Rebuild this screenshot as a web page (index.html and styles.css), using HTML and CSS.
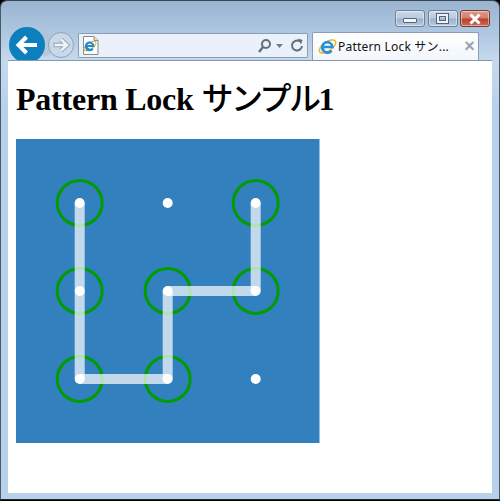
FILE: index.html
```html
<!DOCTYPE html>
<html lang="ja">
<head>
<meta charset="utf-8">
<title>Pattern Lock サンプル1</title>
<link rel="stylesheet" href="styles.css">
</head>
<body>
<div class="window">
  <header class="chrome">
    <div class="controls">
      <div class="ctl"><span class="min-glyph"></span></div>
      <div class="ctl"><span class="max-glyph"></span></div>
      <div class="ctl close">
        <svg width="16" height="12" viewBox="0 0 16 12"><path d="M3.5 1.5 L12.5 10.5 M12.5 1.5 L3.5 10.5" stroke="#fff" stroke-width="3" fill="none"/></svg>
      </div>
    </div>
    <div class="toolbar">
      <svg class="nav" width="70" height="40" viewBox="0 0 70 40">
        <path d="M27 2 C36 6 40 8 52 6 L52 22 L36 30 Z" fill="#b3c3d4" opacity=".75"/>
        <circle cx="53" cy="18" r="12.5" fill="#c9d9ea" stroke="#8fa3b8" stroke-width="1"/>
        <path d="M45.5 18 H58 M53 12.5 L59 18 L53 23.5" fill="none" stroke="#93a5b8" stroke-width="4.6"/>
        <path d="M46.5 18 H58 M53 12.5 L59 18 L53 23.5" fill="none" stroke="#eef3f8" stroke-width="2.6"/>
        <circle cx="19" cy="18" r="18" fill="#0c7fbc"/>
        <path d="M10.5 18 H29 M18.5 10 L10.5 18 L18.5 26" fill="none" stroke="#fff" stroke-width="4"/>
      </svg>
      <div class="address">
        <svg class="page-icon" width="17" height="19" viewBox="0 0 17 19">
          <path d="M1.5 .5 H12 L16 4.5 V18.5 H1.5 Z" fill="#fff" stroke="#8a8a8a"/>
          <path d="M12 .5 V4.5 H16" fill="#ddd" stroke="#8a8a8a"/>
          <ellipse cx="8" cy="10" rx="7" ry="3" fill="none" stroke="#e8b321" stroke-width="1.2" transform="rotate(-35 8 10)"/>
          <path d="M4 10 H11.5 A3.9 3.9 0 1 0 10.8 12.6 M4.5 10 A4 4 0 0 0 11 13" fill="none" stroke="#1f8bd8" stroke-width="2"/>
        </svg>
        <svg class="addr-tools" width="50" height="16" viewBox="0 0 50 16">
          <circle cx="9" cy="6" r="4" fill="none" stroke="#5f6f7f" stroke-width="2"/>
          <path d="M6 9 L2 14" stroke="#5f6f7f" stroke-width="2.4"/>
          <path d="M19 6 H26 L22.500 10 Z" fill="#6f7f8f"/>
          <path d="M43 3.500 A5 5 0 1 0 45 8" fill="none" stroke="#5f6f7f" stroke-width="2"/>
          <path d="M41 .5 L45.500 2 L44 6.500 Z" fill="#5f6f7f"/>
        </svg>
      </div>
      <div class="tab">
        <svg width="19" height="19" viewBox="0 0 19 19">
          <ellipse cx="9.500" cy="9.500" rx="9.500" ry="4.500" fill="none" stroke="#edb82c" stroke-width="1.500" transform="rotate(-35 9.500 9.500)"/>
          <path d="M4.500 10 H14.500 A5.200 5.200 0 1 0 13.500 13.500 M4.800 10 A5 5 0 0 0 13.500 14" fill="none" stroke="#2a90db" stroke-width="2.600"/>
        </svg>
        <span class="tab-title">Pattern Lock サン...</span>
        <span class="tab-x">×</span>
      </div>
    </div>
  </header>
  <main class="page">
    <h1>Pattern Lock <span class="kana">サンプル</span>1</h1>
    <svg class="pattern" width="304" height="304" viewBox="0 0 304 304">
      <rect width="303.500" height="304" fill="#3380be"/>
      <g fill="none" stroke="#009c00" stroke-width="3">
        <circle cx="63.700" cy="64" r="22.500"/>
        <circle cx="239.700" cy="64" r="22.500"/>
        <circle cx="63.700" cy="152" r="22.500"/>
        <circle cx="151.700" cy="152" r="22.500"/>
        <circle cx="239.700" cy="152" r="22.500"/>
        <circle cx="63.700" cy="240" r="22.500"/>
        <circle cx="151.700" cy="240" r="22.500"/>
      </g>
      <g stroke="#fff" stroke-width="10" stroke-opacity=".7">
        <path d="M63.700 64 V152" fill="none"/>
        <path d="M63.700 152 V240" fill="none"/>
        <path d="M63.700 240 H151.700" fill="none"/>
        <path d="M151.700 240 V152" fill="none"/>
        <path d="M151.700 152 H239.700" fill="none"/>
        <path d="M239.700 152 V64" fill="none"/>
      </g>
      <g fill="#fff">
        <circle cx="63.700" cy="64" r="5"/>
        <circle cx="151.700" cy="64" r="5"/>
        <circle cx="239.700" cy="64" r="5"/>
        <circle cx="63.700" cy="152" r="5"/>
        <circle cx="151.700" cy="152" r="5"/>
        <circle cx="239.700" cy="152" r="5"/>
        <circle cx="63.700" cy="240" r="5"/>
        <circle cx="151.700" cy="240" r="5"/>
        <circle cx="239.700" cy="240" r="5"/>
      </g>
    </svg>
  </main>
</div>
</body>
</html>
```
FILE: styles.css
```css
html, body {
  margin: 0;
  height: 100%;
  background: #000;
}
body {
  width: 500px;
  height: 501px;
  overflow: hidden;
}
.window {
  box-sizing: border-box;
  width: 500px;
  height: 500px;
  display: flex;
  flex-direction: column;
  padding: 0 7px 6px 7px;
  border: 1px solid #4a5a6a;
  border-top-color: #3c4754;
  border-bottom-color: #1a2a30;
  border-radius: 7px 7px 0 0;
  background: linear-gradient(#9ab4d1 0, #b4cce4 40px, #c6daee 60px, #b9d2ec 100px, #b9d2ec 100%);
}
.chrome {
  height: 59px;
  margin: 0 -7px;
  flex: none;
  overflow: hidden;
  border-radius: 6px 6px 0 0;
}
.controls {
  display: flex;
  justify-content: flex-end;
  gap: 2.5px;
  padding: 9px 9px 0 0;
  height: 16px;
}
.ctl {
  box-sizing: border-box;
  width: 30px;
  height: 17px;
  border: 1px solid #6f8198;
  border-radius: 3px;
  background: linear-gradient(#c9d8e8 0, #b9cbdf 45%, #9db3cc 55%, #b7cbe0 100%);
  box-shadow: inset 0 0 0 1px rgba(255,255,255,.45);
  display: flex;
  align-items: center;
  justify-content: center;
}
.min-glyph {
  width: 12px;
  height: 3px;
  margin-top: 4px;
  background: #f4f7fa;
  border: 1px solid #56657a;
  border-radius: 1px;
}
.max-glyph {
  box-sizing: border-box;
  width: 11px;
  height: 9px;
  border: 2px solid #eef3f8;
  outline: 1px solid #56657a;
  outline-offset: -3px;
  box-shadow: 0 0 0 1px #56657a;
}
.close {
  border-color: #7a3a30;
  background: linear-gradient(#dc9a8c 0, #d5806f 45%, #b9422c 55%, #cc6a55 100%);
}
.toolbar {
  display: flex;
  align-items: flex-start;
  margin-top: 7px;
  padding: 0 7px;
}
.nav {
  flex: none;
  margin-top: -6px;
}
.address {
  box-sizing: border-box;
  width: 230px;
  height: 25px;
  flex: none;
  display: flex;
  align-items: center;
  justify-content: space-between;
  padding: 0 0 0 3px;
  background: #eaf1fa;
  border: 1px solid #8a9db3;
  border-radius: 1px;
}
.tab {
  box-sizing: border-box;
  width: 167px;
  height: 28px;
  flex: none;
  margin: -1px 0 0 4px;
  display: flex;
  align-items: center;
  gap: 1px;
  padding: 0 3px 1px 5px;
  background: linear-gradient(#ffffff, #f2f6fb);
  border: 1px solid #8a9db3;
  border-bottom: 0;
  border-radius: 2px 2px 0 0;
  font: 12px "Noto Sans", "Noto Sans CJK JP", sans-serif;
  letter-spacing: .2px;
  color: #111;
  white-space: nowrap;
}
.tab-title {
  flex: 1;
}
.tab-x {
  font: bold 18px "Liberation Sans", sans-serif;
  color: #9aa3ad;
}
.page {
  flex: 1;
  background: #fff;
  border-top: 1px solid #8397ad;
  padding: 0 8px;
  overflow: hidden;
}
h1 {
  margin: 20px 0 21px;
  font: bold 32px/37px "Liberation Serif", "Noto Sans CJK JP", serif;
  letter-spacing: -.23px;
  color: #000;
  white-space: nowrap;
}
.kana {
  font-weight: 500;
  letter-spacing: -2.5px;
}
.pattern {
  display: block;
}
```
